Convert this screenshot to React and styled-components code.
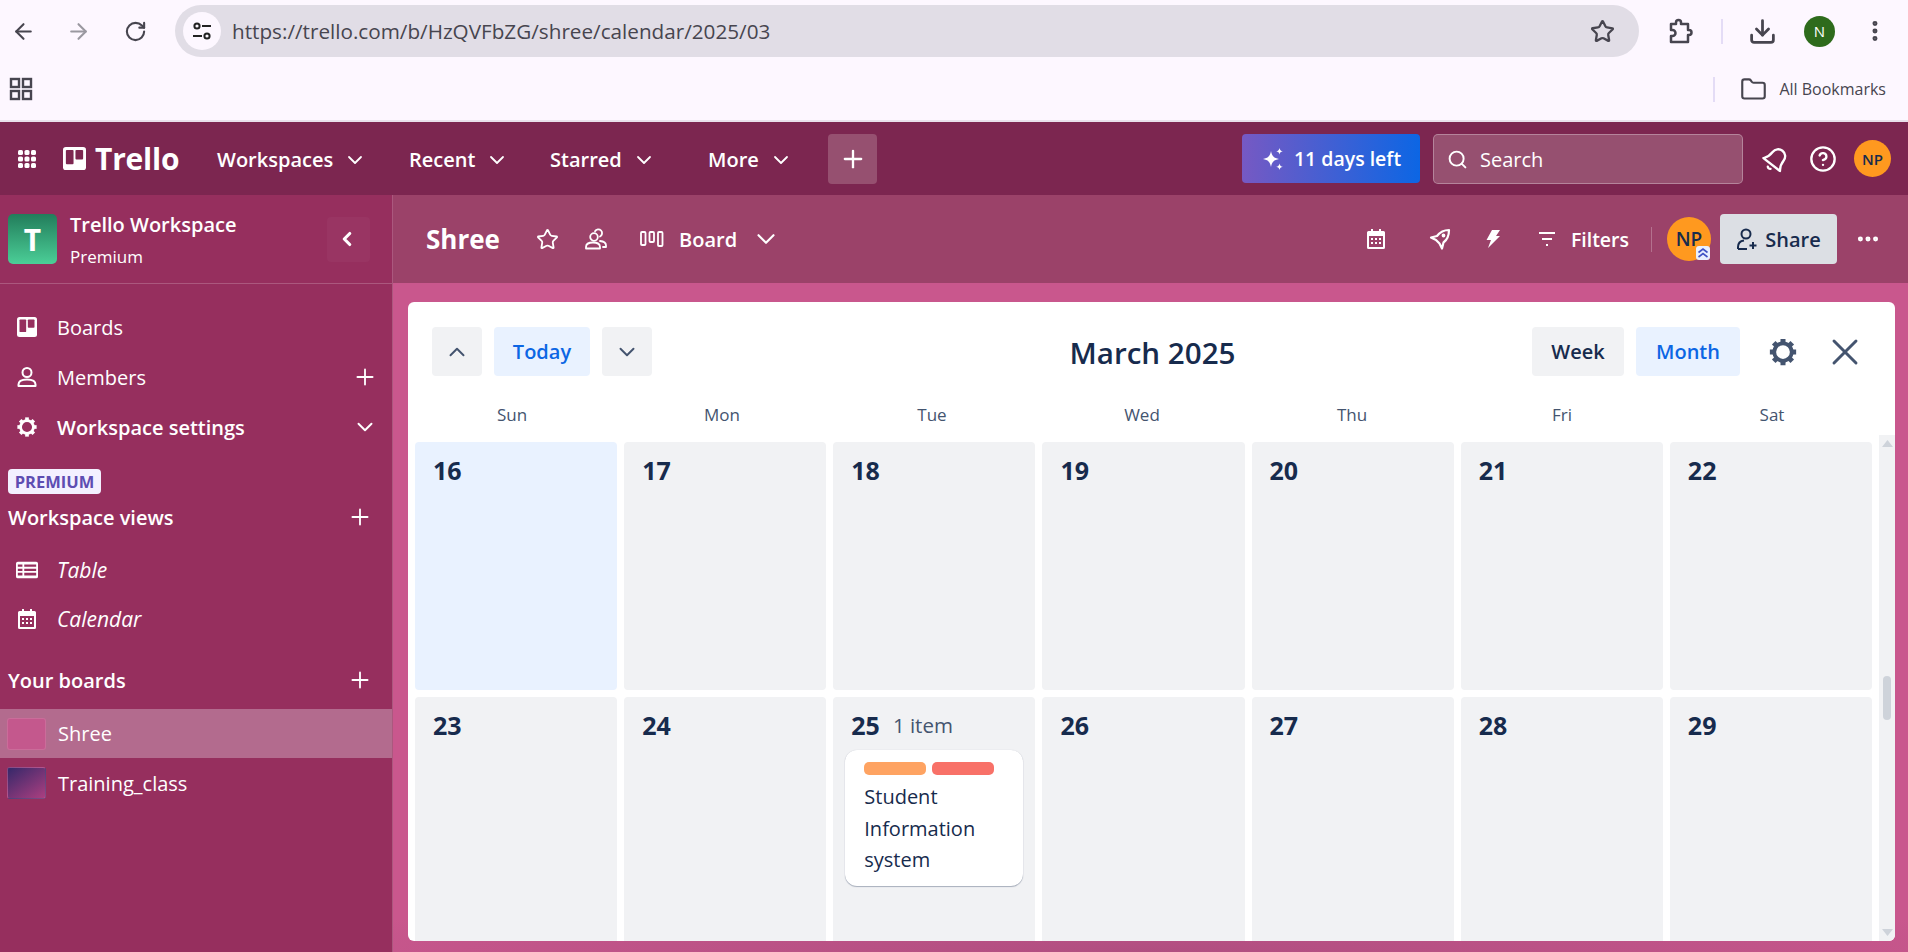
import React from "react";
import styled, { createGlobalStyle } from "styled-components";
import { ArrowLeft, ArrowRight, RotateCw, Star, Download, Search, CircleHelp, ChevronDown, ChevronUp, ChevronLeft, Plus, X, Folder, Ellipsis, EllipsisVertical } from "lucide-react";

const GlobalStyle = createGlobalStyle`
  html, body {
    margin: 0;
    padding: 0;
    width: 1908px;
    height: 952px;
    overflow: hidden;
    font-family: "Open Sans", "Noto Sans", sans-serif;
  }
  * { box-sizing: border-box; }
`;

const Page = styled.div`
  width: 1908px;
  height: 952px;
  display: flex;
  flex-direction: column;
  overflow: hidden;
`;

/* browser chrome */
const Chrome = styled.div`
  height: 122px;
  flex: none;
  background: #fdf7ff;
  border-bottom: 2px solid #e9e0eb;
`;

const AddressRow = styled.div`
  height: 62px;
  display: flex;
  align-items: center;
  color: #47454f;
`;

const ToolButton = styled.div`
  width: ${(p) => p.$w || 56}px;
  height: 28px;
  flex: none;
  display: flex;
  align-items: center;
  justify-content: center;
  color: ${(p) => p.$muted ? "#9a98a0" : "#47454f"};
`;

const Omnibox = styled.div`
  width: 1464px;
  height: 52px;
  margin: 0 13px 0 15px;
  flex: none;
  border-radius: 26px;
  background: #e1dde6;
  display: flex;
  align-items: center;
  padding: 0 24px 0 8px;
`;

const SiteChip = styled.div`
  width: 38px;
  height: 38px;
  flex: none;
  border-radius: 50%;
  background: #fdf7ff;
  display: flex;
  align-items: center;
  justify-content: center;
`;

const UrlText = styled.div`
  flex: 1;
  margin-left: 11px;
  font-size: 20.7px;
  color: #47454f;
  white-space: nowrap;
`;

const ChromeDivider = styled.div`
  width: 2px;
  height: 25px;
  background: #e4dcf6;
  flex: none;
  margin: 0 ${(p) => p.$after || 0}px 0 ${(p) => p.$before || 0}px;
`;

const ProfileDot = styled.div`
  width: 31px;
  height: 31px;
  flex: none;
  border-radius: 50%;
  background: #2e6b1c;
  color: #fff;
  font-size: 15px;
  display: flex;
  align-items: center;
  justify-content: center;
  margin: 0 27px 0 27px;
`;

const BookmarkRow = styled.div`
  height: 58px;
  display: flex;
  align-items: center;
  justify-content: space-between;
  padding: 0 22px 4px 9px;
  color: #47454f;
`;

const BookmarkAll = styled.div`
  display: flex;
  align-items: center;
  font-size: 16px;
  white-space: nowrap;
`;

/* trello top bar */
const TopBar = styled.div`
  height: 73px;
  flex: none;
  background: #7c2650;
  display: flex;
  align-items: center;
  padding: 0 17px 0 16px;
  color: #fff;
`;

const Brand = styled.div`
  display: flex;
  align-items: center;
  margin-left: 25px;
  width: 154px;
  gap: 9px;
  font-size: 30px;
  line-height: 1;
  font-weight: 700;
  letter-spacing: -0.2px;
`;

const NavItem = styled.div`
  width: ${(p) => p.$w}px;
  flex: none;
  display: flex;
  align-items: center;
  gap: 10px;
  padding-top: 2px;
  font-size: 20px;
  font-weight: 600;
  white-space: nowrap;
`;

const CreateButton = styled.div`
  width: 49px;
  height: 50px;
  flex: none;
  border-radius: 4px;
  background: #965070;
  display: flex;
  align-items: center;
  justify-content: center;
`;

const TopRight = styled.div`
  margin-left: auto;
  display: flex;
  align-items: center;
`;

const TrialButton = styled.div`
  width: 178px;
  height: 49px;
  border-radius: 4px;
  background: linear-gradient(90deg, #7659c3, #0c66e4);
  display: flex;
  align-items: center;
  justify-content: center;
  gap: 9px;
  font-size: 19.5px;
  font-weight: 600;
  white-space: nowrap;
`;

const SearchBox = styled.div`
  width: 310px;
  height: 50px;
  margin: 0 17px 0 13px;
  border-radius: 5px;
  background: #965070;
  border: 1px solid rgba(255, 255, 255, 0.3);
  display: flex;
  align-items: center;
  gap: 12px;
  padding: 2px 0 0 13px;
  font-size: 20px;
  color: #fff;
`;

const IconSlot = styled.div`
  width: ${(p) => p.$w || 24}px;
  flex: none;
  display: flex;
  align-items: center;
  justify-content: center;
  margin-right: ${(p) => p.$mr || 0}px;
`;

const Avatar = styled.div`
  position: relative;
  width: ${(p) => p.$size}px;
  height: ${(p) => p.$size}px;
  flex: none;
  border-radius: 50%;
  background: #ff991f;
  color: #172b4d;
  font-size: ${(p) => p.$font}px;
  font-weight: 600;
  display: flex;
  align-items: center;
  justify-content: center;
`;

const AdminBadge = styled.div`
  position: absolute;
  right: 1px;
  bottom: 1px;
  width: 14px;
  height: 14px;
  border-radius: 3px;
  background: #e9f0ff;
  display: flex;
  align-items: center;
  justify-content: center;
`;

/* body */
const Body = styled.div`
  flex: 1;
  display: flex;
  min-height: 0;
`;

const Sidebar = styled.aside`
  width: 393px;
  flex: none;
  background: #962f5e;
  border-right: 1px solid rgba(255, 255, 255, 0.2);
  color: #fff;
`;

const WorkspaceHead = styled.div`
  height: 89px;
  display: flex;
  align-items: center;
  padding: 0 22px 0 8px;
  border-bottom: 1px solid rgba(255, 255, 255, 0.2);
`;

const WorkspaceLogo = styled.div`
  width: 49px;
  height: 50px;
  flex: none;
  border-radius: 5px;
  background: linear-gradient(180deg, #227d5b, #4bce97);
  display: flex;
  align-items: center;
  justify-content: center;
  font-size: 30px;
  font-weight: 700;
`;

const WorkspaceName = styled.div`
  flex: 1;
  margin: 3px 0 0 13px;
  font-size: 20px;
  font-weight: 600;
  line-height: 32px;
  white-space: nowrap;
`;

const WorkspacePlan = styled.div`
  font-size: 17px;
  font-weight: 400;
`;

const CollapseButton = styled.div`
  width: 43px;
  height: 45px;
  border-radius: 4px;
  padding-right: 4px;
  background: rgba(255, 255, 255, 0.03);
  display: flex;
  align-items: center;
  justify-content: center;
`;

const SideList = styled.div`
  padding-top: 18px;
`;

const SideItem = styled.div`
  height: ${(p) => p.$h || 50}px;
  margin-top: ${(p) => p.$top || 0}px;
  display: flex;
  align-items: center;
  padding: 0 14px 0 16px;
  font-size: ${(p) => p.$italic ? 21 : 20}px;
  font-weight: ${(p) => p.$strong ? 600 : 400};
  font-style: ${(p) => p.$italic ? "italic" : "normal"};
`;

const SideIcon = styled.div`
  width: 22px;
  margin-right: 19px;
  flex: none;
  display: flex;
  align-items: center;
  justify-content: center;
`;

const SideEnd = styled.div`
  margin-left: auto;
  display: flex;
  align-items: center;
`;

const PremiumTag = styled.div`
  width: 93px;
  height: 25px;
  margin: 17px 0 0 8px;
  border-radius: 4px;
  background: #f3f0ff;
  color: #5e4db2;
  font-size: 16.5px;
  font-weight: 700;
  display: flex;
  align-items: center;
  justify-content: center;
`;

const SectionTitle = styled.div`
  height: 46px;
  margin-top: ${(p) => p.$top || 0}px;
  display: flex;
  align-items: center;
  justify-content: space-between;
  padding: 0 19px 0 8px;
  font-size: 20px;
  font-weight: 600;
`;

const BoardRow = styled.div`
  height: ${(p) => p.$h || 49}px;
  margin-top: ${(p) => p.$top || 0}px;
  display: flex;
  align-items: center;
  gap: 12px;
  padding-left: 7px;
  font-size: 20px;
  background: ${(p) => p.$active ? "#b36b8e" : "transparent"};
`;

const BoardThumb = styled.div`
  width: 39px;
  height: 32px;
  flex: none;
  border-radius: 3px;
  background: ${(p) => p.$bg};
  border: 1px solid rgba(255, 255, 255, 0.12);
`;

const Main = styled.main`
  flex: 1;
  min-width: 0;
  display: flex;
  flex-direction: column;
`;

const BoardHeader = styled.div`
  height: 88px;
  flex: none;
  background: #9b4269;
  display: flex;
  align-items: center;
  padding: 0 9px 0 33px;
  color: #fff;
`;

const BoardTitle = styled.div`
  font-size: 26px;
  font-weight: 700;
  width: 109px;
  flex: none;
`;

const ViewLabel = styled.div`
  font-size: 20px;
  font-weight: 600;
  margin: 0 14px 0 15px;
`;

const HeaderRight = styled.div`
  margin-left: auto;
  display: flex;
  align-items: center;
`;

const FiltersLabel = styled.div`
  font-size: 19.5px;
  font-weight: 600;
  margin-left: 14px;
`;

const HeaderDivider = styled.div`
  width: 1px;
  height: 25px;
  background: rgba(255, 255, 255, 0.25);
  margin: 0 15px 0 22px;
`;

const ShareButton = styled.div`
  width: 117px;
  height: 50px;
  margin-left: 9px;
  border-radius: 4px;
  background: #dcdfe4;
  color: #172b4d;
  display: flex;
  align-items: center;
  justify-content: center;
  gap: 7px;
  font-size: 20px;
  font-weight: 600;
`;

const Canvas = styled.div`
  flex: 1;
  min-height: 0;
  padding: 19px 13px 11px 15px;
  background: radial-gradient(ellipse 900px 60px at 50% 100%, #b04e80, transparent), #c9578d;
`;

const Panel = styled.section`
  height: 100%;
  border-radius: 6px;
  background: #fff;
  display: flex;
  flex-direction: column;
  overflow: hidden;
`;

const Toolbar = styled.div`
  display: grid;
  grid-template-columns: 1fr auto 1fr;
  align-items: center;
  padding: 25px 28px 0 24px;
`;

const ToolGroup = styled.div`
  display: flex;
  align-items: center;
  gap: 12px;
  justify-content: ${(p) => p.$end ? "flex-end" : "flex-start"};
`;

const CalButton = styled.div`
  width: ${(p) => p.$w}px;
  height: 49px;
  border-radius: 4px;
  background: ${(p) => p.$on ? "#e9f2ff" : "#f1f2f4"};
  color: ${(p) => p.$on ? "#0c66e4" : "#172b4d"};
  display: flex;
  align-items: center;
  justify-content: center;
  font-size: 20px;
  font-weight: 600;
`;

const GearSlot = styled.div`
  width: 30px;
  flex: none;
  display: flex;
  justify-content: center;
  margin: 0 13px 0 16px;
`;

const MonthTitle = styled.h2`
  margin: 0;
  padding: 2px 0 0 6px;
  font-size: 29.6px;
  font-weight: 600;
  color: #172b4d;
`;

const WeekHead = styled.div`
  display: grid;
  grid-template-columns: repeat(7, 210px);
  height: 59px;
  align-items: center;
  padding-top: 17px;
  margin-left: -1px;
`;

const WeekDay = styled.div`
  text-align: center;
  font-size: 17px;
  color: #44546f;
`;

const Scroller = styled.div`
  flex: 1;
  min-height: 0;
  display: flex;
`;

const Grid = styled.div`
  flex: 1;
  display: grid;
  grid-template-columns: repeat(7, 1fr);
  grid-auto-rows: 248px;
  gap: 7px;
  padding: 7px 7px 0;
  overflow: hidden;
`;

const DayCell = styled.div`
  border-radius: 4px;
  background: ${(p) => p.$today ? "#e9f2ff" : "#f1f2f4"};
  padding: 10px 12px 0;
`;

const DayHead = styled.div`
  display: flex;
  align-items: center;
  gap: 13px;
  padding-left: 6px;
  height: 35px;
`;

const DayNum = styled.span`
  font-size: 25px;
  font-weight: 700;
  color: #172b4d;
`;

const ItemCount = styled.span`
  font-size: 20.5px;
  color: #44546f;
`;

const Card = styled.div`
  margin-top: 8px;
  border-radius: 12px;
  background: #fff;
  box-shadow: 0 1px 1px rgba(9, 30, 66, 0.3), 0 0 1px rgba(9, 30, 66, 0.2);
  padding: 12px 12px 10px 19px;
  height: 136px;
`;

const LabelRow = styled.div`
  display: flex;
  gap: 6px;
`;

const Label = styled.div`
  width: 62px;
  height: 13px;
  border-radius: 5px;
  background: ${(p) => p.$color};
`;

const CardText = styled.div`
  margin-top: 6px;
  font-size: 20px;
  line-height: 31.5px;
  color: #172b4d;
`;

const Scrollbar = styled.div`
  width: 16px;
  flex: none;
  background: #f1f2f4;
  display: flex;
  flex-direction: column;
  align-items: center;
  justify-content: space-between;
  padding: 5px 0;
  position: relative;
`;

const ScrollThumb = styled.div`
  position: absolute;
  top: 241px;
  left: 4px;
  width: 8px;
  height: 44px;
  border-radius: 4px;
  background: #ced3da;
`;

/* drawn icons */
const TrelloMark = ({ size = 23, hole }) => (
  <svg width={size} height={size} viewBox="0 0 24 24">
    <rect x="0" y="0" width="24" height="24" rx="3" fill="#fff" />
    <rect x="3" y="3" width="8" height="15" rx="1" fill={hole} />
    <rect x="13" y="3" width="8" height="10" rx="1" fill={hole} />
  </svg>
);

const AppGrid = () => (
  <svg width="22" height="22" viewBox="0 0 22 22" fill="#fff">
    {[2, 8.5, 15].flatMap((y) => [2, 8.5, 15].map((x) => <rect key={x + "-" + y} x={x} y={y} width="5" height="5" rx="1.6" />))}
  </svg>
);

const Tune = () => (
  <svg width="22" height="22" viewBox="0 0 22 22" fill="none" stroke="#222" strokeWidth="2">
    <circle cx="6" cy="6" r="2.6" />
    <path d="M11 6h9M2 16h9" />
    <circle cx="16" cy="16" r="2.6" />
  </svg>
);

const Puzzle = () => (
  <svg width="28" height="28" viewBox="0 0 28 28" fill="none" stroke="#47454f" strokeWidth="2.5" strokeLinejoin="round">
    <path d="M5 7h5V5.500a2.500 2.500 0 0 1 5 0V7h7v6h1a2.500 2.500 0 0 1 0 5h-1v7H5v-6h1.500a3 3 0 0 0 0-6H5z" />
  </svg>
);

const AppsOutline = () => (
  <svg width="24" height="24" viewBox="0 0 24 24" fill="none" stroke="#47454f" strokeWidth="2.4">
    <rect x="2" y="2" width="8" height="8" />
    <rect x="14" y="2" width="8" height="8" />
    <rect x="2" y="14" width="8" height="8" />
    <rect x="14" y="14" width="8" height="8" />
  </svg>
);

const Sparkles = () => (
  <svg width="24" height="24" viewBox="0 0 24 24" fill="#fff">
    <path d="M10 4c.9 5 2.900 7.100 8 8-5.100.9-7.100 3-8 8-.9-5-2.900-7.100-8-8 5.100-.9 7.100-3 8-8z" />
    <path d="M18.500 1c.4 2.100 1.200 2.900 3.300 3.300-2.100.4-2.900 1.200-3.300 3.300-.4-2.100-1.200-2.900-3.300-3.300 2.100-.4 2.900-1.200 3.300-3.300z" />
    <path d="M18.500 16.500c.4 2.100 1.200 2.900 3.300 3.300-2.100.4-2.900 1.200-3.300 3.300-.4-2.100-1.200-2.900-3.300-3.300 2.100-.4 2.900-1.200 3.300-3.300z" />
  </svg>
);

const Bell = () => (
  <svg width="28" height="28" viewBox="0 0 24 24" fill="none" stroke="#fff" strokeWidth="2" strokeLinejoin="round" strokeLinecap="round">
    <g transform="rotate(38 12 12)">
      <path d="M6 9a6 6 0 0 1 12 0c0 6 2.500 8 3 9H3c.5-1 3-3 3-9z" />
      <path d="M10.500 21.500a2 2 0 0 0 3 0" />
    </g>
  </svg>
);

const Person = () => (
  <svg width="22" height="22" viewBox="0 0 22 22" fill="none" stroke="#fff" strokeWidth="2" strokeLinejoin="round">
    <circle cx="11" cy="6.500" r="4.500" />
    <path d="M2.500 20v-1.500c0-3.500 3.500-5 8.500-5s8.500 1.500 8.500 5V20z" />
  </svg>
);

const Gear = ({ size = 22, color = "#fff" }) => (
  <svg width={size} height={size} viewBox="0 0 24 24" fill="none" stroke={color}>
    <circle cx="12" cy="12" r="7" strokeWidth="3" />
    <g strokeWidth="4" strokeLinecap="butt">
      {[0, 45, 90, 135, 180, 225, 270, 315].map((a) => (
        <path key={a} d="M12 1.500v3.500" transform={`rotate(${a} 12 12)`} />
      ))}
    </g>
  </svg>
);

const TableIcon = () => (
  <svg width="24" height="18" viewBox="0 0 24 18" fill="#fff">
    <path fillRule="evenodd" d="M2 0h20a2 2 0 0 1 2 2v14a2 2 0 0 1-2 2H2a2 2 0 0 1-2-2V2a2 2 0 0 1 2-2zm0 3v2.500h5V3zm7 0v2.500h13V3zM2 7.500V10h5V7.500zm7 0V10h13V7.500zM2 12v3h5v-3zm7 0v3h13v-3z" />
  </svg>
);

const CalendarIcon = ({ size = 20, hole = "#962f5e" }) => (
  <svg width={size} height={size} viewBox="0 0 20 20">
    <path d="M5 0h2v2h6V0h2v2h2.500A1.500 1.500 0 0 1 19 3.500v15a1.500 1.500 0 0 1-1.500 1.500h-15A1.500 1.500 0 0 1 1 18.500v-15A1.500 1.500 0 0 1 2.500 2H5z" fill="#fff" />
    <rect x="3" y="7" width="14" height="11" fill={hole} />
    {[5, 9, 13].flatMap((x) => [9, 13].map((y) => <rect key={x + "-" + y} x={x} y={y} width="2" height="2" fill="#fff" />))}
  </svg>
);

const People = () => (
  <svg width="24" height="22" viewBox="0 0 24 22" fill="none" stroke="#fff" strokeWidth="1.800" strokeLinejoin="round" strokeLinecap="round">
    <circle cx="10" cy="9" r="3.800" />
    <path d="M2 20.500v-1.500c0-3 3-4.500 7-4.500s7 1.500 7 4.500v1.500z" />
    <path d="M11 3.200a3.800 3.800 0 1 1 5 5.300M16 13c3.500.3 6 1.800 6 4.500V19h-3" />
  </svg>
);

const BoardColumns = () => (
  <svg width="24" height="16" viewBox="0 0 24 16" fill="none" stroke="#fff" strokeWidth="1.800">
    <rect x="1" y="1" width="4.500" height="13" rx="1" />
    <rect x="9.500" y="1" width="4.500" height="10" rx="1" />
    <rect x="18" y="1" width="4.500" height="14" rx="1" />
  </svg>
);

const RocketIcon = () => (
  <svg width="24" height="24" viewBox="0 0 24 24" fill="none" stroke="#fff" strokeWidth="2.200" strokeLinejoin="round">
    <path d="M21 3c-5 0-9 2-12 6l-6 1.500 5 2.500 3.500 3.500 2.500 5 1.500-6c4-3 5.500-7 5.500-12.500z" />
    <circle cx="15.500" cy="8.500" r=".8" fill="#fff" />
  </svg>
);

const Bolt = () => (
  <svg width="16" height="20" viewBox="0 0 16 20" fill="#fff">
    <path d="M7 1h8l-4 6h4L3 19l3-8H1.500z" />
  </svg>
);

const FilterIcon = () => (
  <svg width="20" height="18" viewBox="0 0 20 18" fill="none" stroke="#fff" strokeWidth="2">
    <path d="M2 3h16M5 9h10M9 15h2" />
  </svg>
);

const AddPerson = () => (
  <svg width="22" height="24" viewBox="0 0 22 24" fill="none" stroke="#172b4d" strokeWidth="2" strokeLinejoin="round">
    <circle cx="10" cy="7" r="4.500" />
    <path d="M2 22v-2c0-4 2.500-6 6-6.500M2 22h9" />
    <path d="M17 15v7M13.500 18.500h7" />
  </svg>
);

const DoubleUp = () => (
  <svg width="12" height="12" viewBox="0 0 12 12" fill="none" stroke="#3f51c4" strokeWidth="1.600">
    <path d="M1.500 5.500L6 2l4.500 3.500M1.500 10L6 6.500 10.500 10" />
  </svg>
);

const Triangle = ({ down }) => (
  <svg width="11" height="7" viewBox="0 0 11 7" fill="#ced3da">
    <path d={down ? "M0 0h11L5.500 7z" : "M0 7h11L5.500 0z"} />
  </svg>
);

const week = ["Sun", "Mon", "Tue", "Wed", "Thu", "Fri", "Sat"];
const days = [16, 17, 18, 19, 20, 21, 22, 23, 24, 25, 26, 27, 28, 29];
const navItems = [
  { name: "Workspaces", w: 192 },
  { name: "Recent", w: 141 },
  { name: "Starred", w: 158 },
  { name: "More", w: 120 },
];

function App() {
  return (
    <Page>
      <GlobalStyle />
      <Chrome>
        <AddressRow>
          <ToolButton $w={46}><ArrowLeft size={25} strokeWidth={2} /></ToolButton>
          <ToolButton $w={64} $muted><ArrowRight size={25} strokeWidth={2} /></ToolButton>
          <ToolButton $w={50}><RotateCw size={23} strokeWidth={2.2} /></ToolButton>
          <Omnibox>
            <SiteChip><Tune /></SiteChip>
            <UrlText>https://trello.com/b/HzQVFbZG/shree/calendar/2025/03</UrlText>
            <Star size={25} strokeWidth={2.2} color="#47454f" />
          </Omnibox>
          <ToolButton><Puzzle /></ToolButton>
          <ChromeDivider $before={13} $after={25} />
          <Download size={29} strokeWidth={2.3} color="#47454f" />
          <ProfileDot>N</ProfileDot>
          <EllipsisVertical size={26} strokeWidth={2.6} color="#47454f" />
        </AddressRow>
        <BookmarkRow>
          <AppsOutline />
          <BookmarkAll>
            <ChromeDivider $after={25} />
            <Folder size={27} strokeWidth={1.9} />
            <IconSlot $w={12} />
            All Bookmarks
          </BookmarkAll>
        </BookmarkRow>
      </Chrome>

      <TopBar>
        <AppGrid />
        <Brand>
          <TrelloMark hole="#7c2650" />
          Trello
        </Brand>
        {navItems.map((item) => (
          <NavItem key={item.name} $w={item.w}>
            {item.name}
            <ChevronDown size={24} strokeWidth={1.8} />
          </NavItem>
        ))}
        <CreateButton><Plus size={28} strokeWidth={2} /></CreateButton>
        <TopRight>
          <TrialButton><Sparkles />11 days left</TrialButton>
          <SearchBox><Search size={21} strokeWidth={2.2} />Search</SearchBox>
          <IconSlot $w={32} $mr={17}><Bell /></IconSlot>
          <IconSlot $w={28} $mr={17}><CircleHelp size={28} strokeWidth={2} /></IconSlot>
          <Avatar $size={37} $font={15}>NP</Avatar>
        </TopRight>
      </TopBar>

      <Body>
        <Sidebar>
          <WorkspaceHead>
            <WorkspaceLogo>T</WorkspaceLogo>
            <WorkspaceName>
              Trello Workspace
              <WorkspacePlan>Premium</WorkspacePlan>
            </WorkspaceName>
            <CollapseButton><ChevronLeft size={22} strokeWidth={3.4} /></CollapseButton>
          </WorkspaceHead>
          <SideList>
            <SideItem>
              <SideIcon><TrelloMark size={20} hole="#962f5e" /></SideIcon>Boards
            </SideItem>
            <SideItem>
              <SideIcon><Person /></SideIcon>Members
              <SideEnd><Plus size={26} strokeWidth={1.7} /></SideEnd>
            </SideItem>
            <SideItem $strong>
              <SideIcon><Gear /></SideIcon>Workspace settings
              <SideEnd><ChevronDown size={26} strokeWidth={1.8} /></SideEnd>
            </SideItem>
          </SideList>
          <PremiumTag>PREMIUM</PremiumTag>
          <SectionTitle>
            Workspace views
            <Plus size={26} strokeWidth={1.7} />
          </SectionTitle>
          <SideItem $h={49} $top={5} $italic>
            <SideIcon><TableIcon /></SideIcon>Table
          </SideItem>
          <SideItem $h={49} $italic>
            <SideIcon><CalendarIcon /></SideIcon>Calendar
          </SideItem>
          <SectionTitle $top={14}>
            Your boards
            <Plus size={26} strokeWidth={1.7} />
          </SectionTitle>
          <BoardRow $active $top={6}>
            <BoardThumb $bg="#c4588d" />Shree
          </BoardRow>
          <BoardRow $h={50}>
            <BoardThumb $bg="linear-gradient(145deg, #36286a, #ab3f80)" />Training_class
          </BoardRow>
        </Sidebar>

        <Main>
          <BoardHeader>
            <BoardTitle>Shree</BoardTitle>
            <IconSlot $w={24} $mr={25}><Star size={23} strokeWidth={1.9} /></IconSlot>
            <IconSlot $w={24} $mr={32}><People /></IconSlot>
            <BoardColumns />
            <ViewLabel>Board</ViewLabel>
            <ChevronDown size={30} strokeWidth={1.7} />
            <HeaderRight>
              <IconSlot $w={22} $mr={41}><CalendarIcon hole="#9b4269" /></IconSlot>
              <IconSlot $w={24} $mr={33}><RocketIcon /></IconSlot>
              <IconSlot $w={16} $mr={36}><Bolt /></IconSlot>
              <FilterIcon />
              <FiltersLabel>Filters</FiltersLabel>
              <HeaderDivider />
              <Avatar $size={44} $font={19}>
                NP
                <AdminBadge><DoubleUp /></AdminBadge>
              </Avatar>
              <ShareButton><AddPerson />Share</ShareButton>
              <IconSlot $w={62}><Ellipsis size={26} strokeWidth={2.6} /></IconSlot>
            </HeaderRight>
          </BoardHeader>
          <Canvas>
            <Panel>
              <Toolbar>
                <ToolGroup>
                  <CalButton $w={50}><ChevronUp size={26} strokeWidth={1.8} color="#44546f" /></CalButton>
                  <CalButton $w={96} $on>Today</CalButton>
                  <CalButton $w={50}><ChevronDown size={26} strokeWidth={1.8} color="#44546f" /></CalButton>
                </ToolGroup>
                <MonthTitle>March 2025</MonthTitle>
                <ToolGroup $end>
                  <CalButton $w={92}>Week</CalButton>
                  <CalButton $w={104} $on>Month</CalButton>
                  <GearSlot><Gear size={30} color="#44546f" /></GearSlot>
                  <X size={44} strokeWidth={1.6} color="#44546f" />
                </ToolGroup>
              </Toolbar>
              <WeekHead>
                {week.map((d) => <WeekDay key={d}>{d}</WeekDay>)}
              </WeekHead>
              <Scroller>
                <Grid>
                  {days.map((d) => (
                    <DayCell key={d} $today={d === 16}>
                      <DayHead>
                        <DayNum>{d}</DayNum>
                        {d === 25 && <ItemCount>1 item</ItemCount>}
                      </DayHead>
                      {d === 25 && (
                        <Card>
                          <LabelRow>
                            <Label $color="#fea362" />
                            <Label $color="#f87168" />
                          </LabelRow>
                          <CardText>Student Information system</CardText>
                        </Card>
                      )}
                    </DayCell>
                  ))}
                </Grid>
                <Scrollbar>
                  <Triangle />
                  <ScrollThumb />
                  <Triangle down />
                </Scrollbar>
              </Scroller>
            </Panel>
          </Canvas>
        </Main>
      </Body>
    </Page>
  );
}

export default App;
